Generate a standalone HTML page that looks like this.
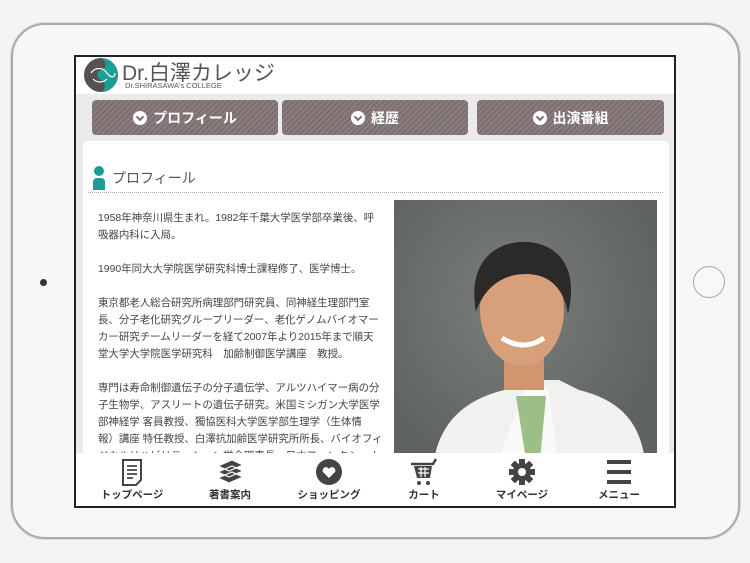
<!DOCTYPE html>
<html><head><meta charset="utf-8"><style>
*{margin:0;padding:0;box-sizing:border-box}
body{width:750px;height:563px;background:#f3f4f6;position:relative;overflow:hidden;font-family:"Liberation Sans","Noto Sans CJK JP",sans-serif}
.ipad{position:absolute;left:11px;top:23px;width:729px;height:516px;border-radius:34px;background:#f6f7f9;border:2px solid #a9abae;box-shadow:0 0 0 1px #d8d9db}
.cam{position:absolute;left:40px;top:279px;width:7px;height:7px;border-radius:50%;background:#333}
.home{position:absolute;left:693px;top:266px;width:32px;height:32px;border-radius:50%;border:1.5px solid #a5a7aa;background:#f7f8fa}
.screen{position:absolute;left:74px;top:55px;width:602px;height:453px;border:2px solid #222;background:#ebebeb;overflow:hidden}
.hdr{position:absolute;left:0;top:0;width:598px;height:37px;background:#fff}
.nav{position:absolute;top:43px;height:35px;border-radius:4px;background:repeating-linear-gradient(135deg,#7d6f70 0 2px,#8a7d7e 2px 4px);color:#fff;font-weight:bold;font-size:14px;display:flex;align-items:center;justify-content:center;gap:6px}
.chev{width:14px;height:14px;border-radius:50%;background:#fff;display:inline-block;position:relative}
.chev:after{content:"";position:absolute;left:4px;top:3px;width:4px;height:4px;border-right:2px solid #7d6f70;border-bottom:2px solid #7d6f70;transform:rotate(45deg)}
.card{position:absolute;left:7px;top:84px;width:586px;height:330px;background:#fff;border-radius:4px}
.txt{position:absolute;left:15px;top:69px;font-size:10.45px;color:#444;line-height:17px;white-space:nowrap}
.photo{position:absolute;left:311px;top:59px;width:263px;height:260px;background:radial-gradient(ellipse at 45% 40%,#7a7e7b,#5f6462 75%);overflow:hidden}
.bot{position:absolute;left:0;top:396px;width:598px;height:55px;background:#fff}
.it{position:absolute;top:0;width:100px;text-align:center;font-size:10.5px;font-weight:bold;color:#333}
.it svg{display:block;margin:5px auto 1px}
</style></head><body>
<div class="ipad"></div>
<div class="cam"></div><div class="home"></div>
<div class="screen">
 <div class="hdr">
  <svg style="position:absolute;left:7px;top:0" width="36" height="36" viewBox="0 0 36 36"><circle cx="18" cy="18" r="17" fill="#565050"/><path d="M18 1a17 17 0 0 1 0 34c6-4 4-10 0-12s-6-8 0-10 6-8 0-12z" fill="#1a9f92"/><path d="M8 16c4-6 12-6 16 0s8 4 8 0" stroke="#fff" stroke-width="1.2" fill="none"/><path d="M10 22c4 4 10 4 14 0" stroke="#fff" stroke-width="1.2" fill="none"/></svg>
  <div style="position:absolute;left:46px;top:0;font-size:21px;color:#555">Dr.白澤カレッジ</div>
  <div style="position:absolute;left:49px;top:24px;font-size:7.5px;color:#555">Dr.SHIRASAWA's COLLEGE</div>
 </div>
 <div class="nav" style="left:16px;width:186px"><span class="chev"></span>プロフィール</div>
 <div class="nav" style="left:206px;width:186px"><span class="chev"></span>経歴</div>
 <div class="nav" style="left:401px;width:187px"><span class="chev"></span>出演番組</div>
 <div class="card">
  <svg style="position:absolute;left:10px;top:25px" width="12" height="25" viewBox="0 0 12 25"><circle cx="6" cy="5" r="5" fill="#1a9f92"/><path d="M0 24V16a4 4 0 0 1 4-4h4a4 4 0 0 1 4 4v8z" fill="#1a9f92"/></svg>
  <div style="position:absolute;left:29px;top:27px;font-size:14px;color:#555">プロフィール</div>
  <div style="position:absolute;left:5px;top:51px;width:575px;border-top:1.5px dotted #aaa"></div>
  <div class="txt">1958年神奈川県生まれ。1982年千葉大学医学部卒業後、呼<br>吸器内科に入局。<br><br>1990年同大大学院医学研究科博士課程修了、医学博士。<br><br>東京都老人総合研究所病理部門研究員、同神経生理部門室<br>長、分子老化研究グループリーダー、老化ゲノムバイオマー<br>カー研究チームリーダーを経て2007年より2015年まで順天<br>堂大学大学院医学研究科　加齢制御医学講座　教授。<br><br>専門は寿命制御遺伝子の分子遺伝学、アルツハイマー病の分<br>子生物学、アスリートの遺伝子研究。米国ミシガン大学医学<br>部神経学 客員教授、獨協医科大学医学部生理学（生体情<br>報）講座 特任教授、白澤抗加齢医学研究所所長、バイオフィ<br>ジカルリハビリテーション学会理事長、日本ファンクショナ</div>
  <div class="photo">
   <svg width="263" height="260" viewBox="0 0 263 260"><path d="M40 260c8-45 40-65 80-72l15-8h30l20 10c40 10 60 30 66 70z" fill="#f1f2f0"/><path d="M132 188l-28 72h60l-10-72z" fill="#fafafa"/><path d="M122 196l10 64h14l6-64z" fill="#9cbf88"/><path d="M110 150h40v40h-40z" fill="#cf9670"/><ellipse cx="128" cy="110" rx="42" ry="56" fill="#d7a07a"/><path d="M82 112c-10-55 25-72 52-70s52 22 40 72c-4-25-18-40-42-40s-42 14-50 38z" fill="#2c2a28"/><path d="M108 138q22 14 42 0" stroke="#fff" stroke-width="5" fill="none"/></svg>
  </div>
 </div>
 <div class="bot">
  <div class="it" style="left:6px"><svg width="22" height="28" viewBox="0 0 22 28"><path d="M2 2h18v20l-5 5H2z" fill="#fff" stroke="#444" stroke-width="2"/><path d="M6 8h10M6 12h10M6 16h10M6 20h6" stroke="#444" stroke-width="1.8"/></svg>トップページ</div>
  <div class="it" style="left:104px"><svg width="30" height="28" viewBox="0 0 30 28"><path d="M3 8l14-6 11 5-14 6z M3 14l14-6 11 5-14 6z M3 20l14-6 11 5-14 6z" fill="#444" stroke="#fff" stroke-width="1.2"/></svg>著書案内</div>
  <div class="it" style="left:203px"><svg width="28" height="28" viewBox="0 0 28 28"><circle cx="14" cy="14" r="13" fill="#444"/><path d="M14 20l-6-6a3.3 3.3 0 0 1 6-3 3.3 3.3 0 0 1 6 3z" fill="#fff"/></svg>ショッピング</div>
  <div class="it" style="left:298px"><svg width="30" height="28" viewBox="0 0 30 28"><path d="M2 6h22l3-5" stroke="#444" stroke-width="2.5" fill="none"/><path d="M5 8h18l-2 12H8z" fill="#444"/><path d="M9 11h11M9 15h11M12 9v10M16 9v10" stroke="#fff" stroke-width="1.2"/><circle cx="10" cy="25" r="2" fill="#444"/><circle cx="19" cy="25" r="2" fill="#444"/></svg>カート</div>
  <div class="it" style="left:396px"><svg width="28" height="28" viewBox="0 0 28 28"><g fill="#444" transform="translate(14 14)"><circle r="9"/><rect x="-3" y="-13" width="6" height="26"/><rect x="-3" y="-13" width="6" height="26" transform="rotate(45)"/><rect x="-3" y="-13" width="6" height="26" transform="rotate(90)"/><rect x="-3" y="-13" width="6" height="26" transform="rotate(135)"/><circle r="4" fill="#fff"/></g></svg>マイページ</div>
  <div class="it" style="left:493px"><svg width="26" height="28" viewBox="0 0 26 28"><path d="M1 4h24M1 14h24M1 24h24" stroke="#444" stroke-width="4"/></svg>メニュー</div>
 </div>
</div>
</body></html>
